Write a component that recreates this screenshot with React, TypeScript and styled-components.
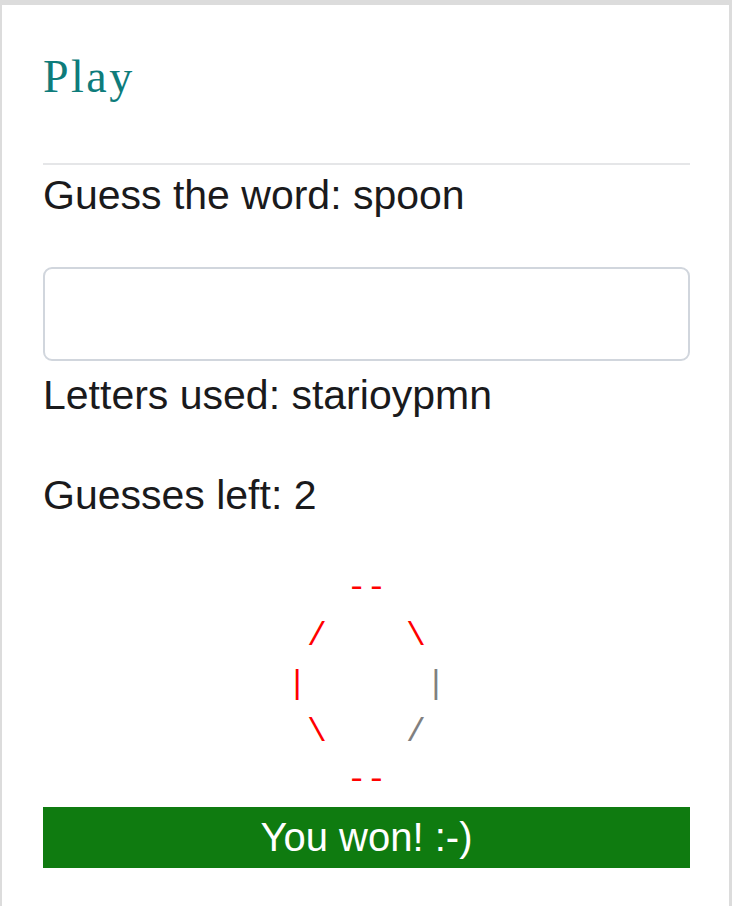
import React from 'react';
import styled, { createGlobalStyle } from 'styled-components';

const GlobalStyle = createGlobalStyle`
  html, body {
    margin: 0;
    padding: 0;
    background: #dcdcdc;
  }
  body {
    font-family: "Liberation Sans", Arial, sans-serif;
    color: #1a1a1c;
  }
`;

const Card = styled.main`
  margin: 5px 3px 0 2px;
  min-height: calc(100vh - 5px);
  background: #ffffff;
  padding: 47px 39px 0 41px;
  box-sizing: border-box;
`;

const Title = styled.h2`
  margin: 0 0 61px;
  font-family: "Liberation Serif", "Times New Roman", serif;
  font-weight: normal;
  font-size: 46px;
  line-height: 50px;
  letter-spacing: 2.5px;
  color: #0e7c7b;
`;

const Rule = styled.hr`
  margin: 0;
  border: 0;
  height: 2px;
  background: #e5e6e8;
`;

const Line = styled.p<{ $gap?: number }>`
  margin: 0 0 ${({ $gap }) => ($gap ?? 41)}px;
  font-size: 41px;
  line-height: 60px;
`;

const GuessInput = styled.input`
  display: block;
  width: 100%;
  height: 94px;
  margin: 0 0 4px;
  box-sizing: border-box;
  border: 2px solid #d1d6dd;
  border-radius: 9px;
  padding: 0 20px;
  font: inherit;
  font-size: 41px;
  outline: none;
`;

const Gallows = styled.pre`
  width: fit-content;
  margin: 0 auto 2px;
  font-family: "Liberation Mono", "Courier New", monospace;
  font-size: 33px;
  line-height: 48px;
`;

const Part = styled.span<{ $hit: boolean }>`
  color: ${({ $hit }) => ($hit ? '#ff0000' : '#808080')};
`;

const Banner = styled.div`
  height: 61px;
  background: #0f7b10;
  color: #ffffff;
  font-size: 40px;
  line-height: 61px;
  text-align: center;
`;

const App: React.FC = () => {
  return (
    <>
      <GlobalStyle />
      <Card>
        <Title>Play</Title>
        <Rule />
        <Line $gap={42}>Guess the word: spoon</Line>
        <GuessInput type="text" aria-label="guess" />
        <Line $gap={40}>Letters used: starioypmn</Line>
        <Line $gap={40}>Guesses left: 2</Line>
        <Gallows>
          {'   '}<Part $hit>--</Part>{'\n'}
          {' '}<Part $hit>/</Part>{'    '}<Part $hit>\</Part>{'\n'}
          <Part $hit>|</Part>{'      '}<Part $hit={false}>|</Part>{'\n'}
          {' '}<Part $hit>\</Part>{'    '}<Part $hit={false}>/</Part>{'\n'}
          {'   '}<Part $hit>--</Part>
        </Gallows>
        <Banner>You won! :-)</Banner>
      </Card>
    </>
  );
};

export default App;
